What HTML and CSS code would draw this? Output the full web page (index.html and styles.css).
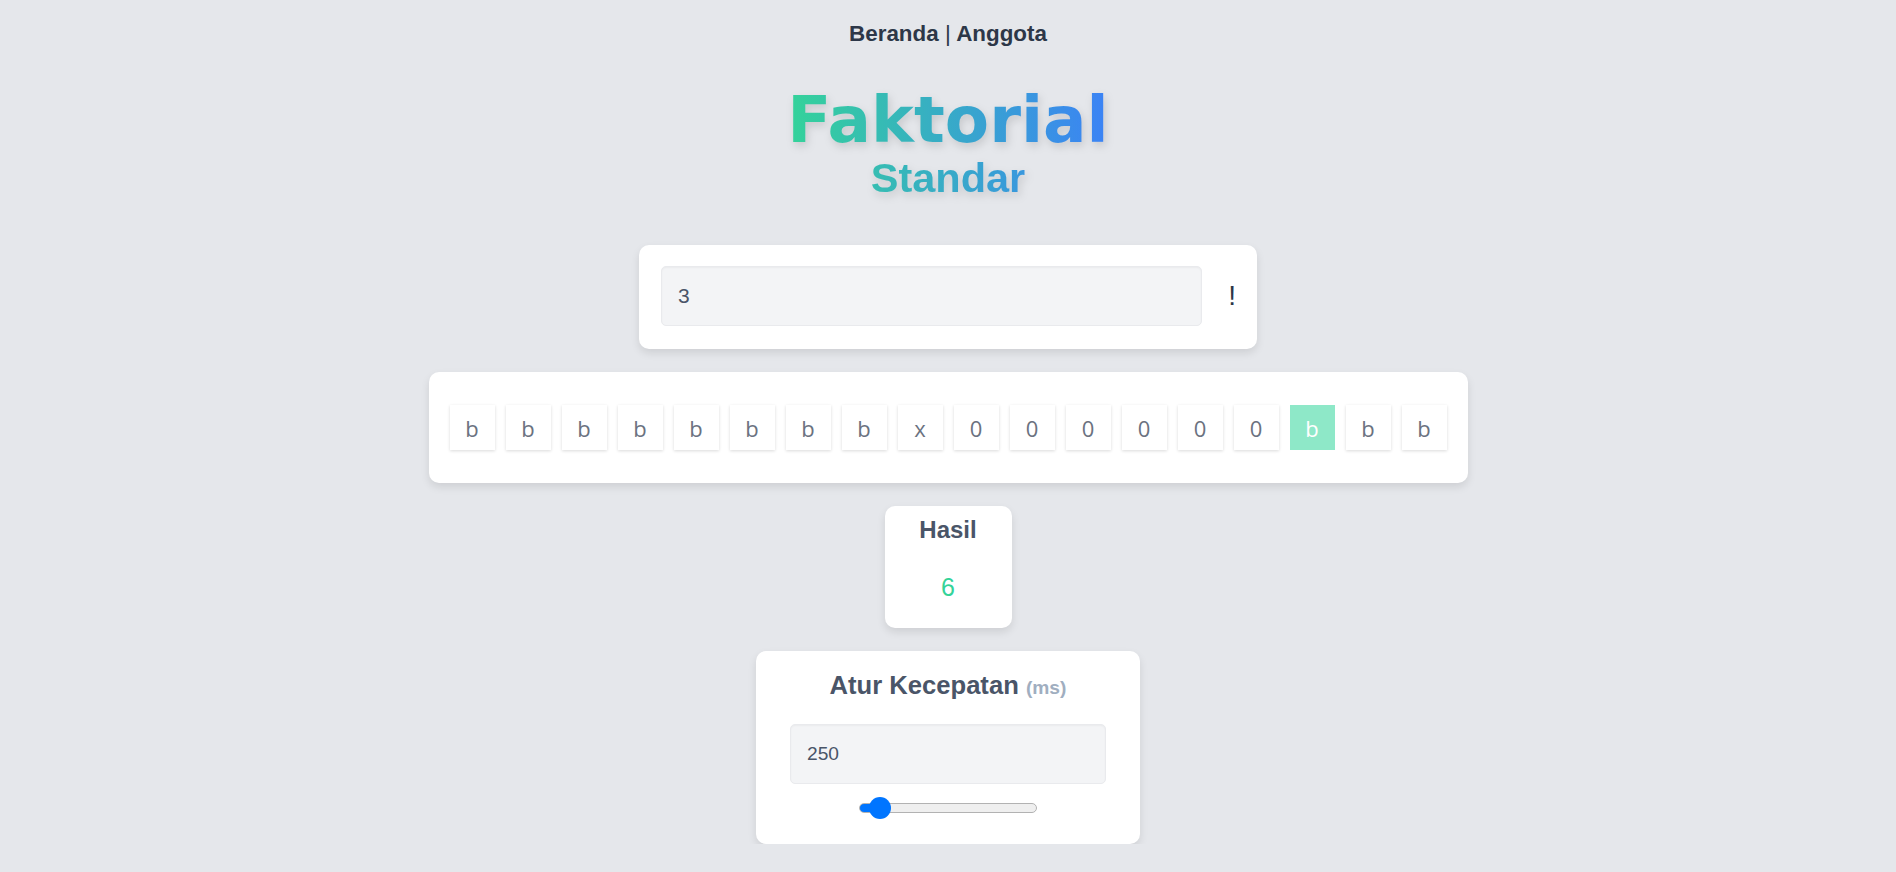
FILE: index.html
```html
<!DOCTYPE html>
<html lang="id">
<head>
<meta charset="utf-8">
<title>Faktorial Standar</title>
<link rel="stylesheet" href="styles.css">
</head>
<body>
<div class="page">
  <nav class="nav"><a href="#">Beranda</a> <span class="sep">|</span> <a href="#">Anggota</a></nav>
  <header class="title">
    <span class="title-main">Faktorial</span>
    <span class="title-sub">Standar</span>
  </header>
  <main class="stack">
    <section class="card input-card">
      <input class="field field-n" type="text" value="3">
      <span class="bang">!</span>
    </section>
    <section class="card tape">
      <div class="cell">b</div>
      <div class="cell">b</div>
      <div class="cell">b</div>
      <div class="cell">b</div>
      <div class="cell">b</div>
      <div class="cell">b</div>
      <div class="cell">b</div>
      <div class="cell">b</div>
      <div class="cell">x</div>
      <div class="cell">0</div>
      <div class="cell">0</div>
      <div class="cell">0</div>
      <div class="cell">0</div>
      <div class="cell">0</div>
      <div class="cell">0</div>
      <div class="cell active">b</div>
      <div class="cell">b</div>
      <div class="cell">b</div>
    </section>
    <section class="card result">
      <h2 class="result-title">Hasil</h2>
      <div class="result-value">6</div>
    </section>
    <section class="card speed">
      <h2 class="speed-title">Atur Kecepatan <span class="unit">(ms)</span></h2>
      <input class="field field-speed" type="text" value="250">
      <input class="slider" type="range" min="100" max="2600" value="250">
    </section>
  </main>
</div>
</body>
</html>
```

FILE: styles.css
```css
body {
  margin: 0;
  background: #e5e7eb;
  font-family: "Liberation Sans", Arial, sans-serif;
  color: #2d3748;
}

.page {
  display: flex;
  flex-direction: column;
  align-items: center;
}

.nav {
  padding-top: 21px;
  font-size: 22.4px;
  font-weight: bold;
  line-height: 26px;
}

.nav a {
  color: #2d3748;
  text-decoration: none;
}

.sep {
  font-weight: normal;
}

.title {
  margin-top: 42px;
  display: flex;
  flex-direction: column;
  align-items: center;
  background: linear-gradient(to right, #34d399, #3b82f6);
  -webkit-background-clip: text;
  background-clip: text;
  color: transparent;
  font-weight: bold;
  filter: drop-shadow(2px 4px 4px rgba(0, 0, 0, 0.13));
}

.title-main {
  font-family: "DejaVu Sans", "Liberation Sans", sans-serif;
  font-size: 64.5px;
  line-height: 62px;
}

.title-sub {
  font-size: 41.5px;
  line-height: 36px;
  margin-top: 9px;
}

.stack {
  display: flex;
  flex-direction: column;
  align-items: center;
  gap: 23px;
  margin-top: 49px;
}

.card {
  background: #fff;
  border-radius: 10px;
  box-shadow: 0 4px 8px rgba(0, 0, 0, 0.1);
  box-sizing: border-box;
}

.input-card {
  width: 618px;
  padding: 21px 21px 23px 22px;
  display: flex;
  align-items: center;
  gap: 26px;
}

.field {
  height: 60px;
  box-sizing: border-box;
  border: 1px solid #e9eaed;
  border-radius: 5px;
  background: #f3f4f6;
  padding: 0 16px;
  font-family: "Liberation Sans", Arial, sans-serif;
  font-size: 19.2px;
  color: #4a5568;
  box-shadow: inset 0 1px 2px rgba(0, 0, 0, 0.04);
  outline: none;
}

.field-n {
  flex: 1;
  min-width: 0;
  font-size: 21px;
}

.bang {
  font-size: 28px;
  color: #2d3748;
}

.tape {
  display: flex;
  gap: 11px;
  padding: 33px 21px;
}

.cell {
  width: 45px;
  height: 45px;
  display: flex;
  align-items: center;
  justify-content: center;
  background: #fff;
  box-shadow: 0 1px 3px rgba(0, 0, 0, 0.15);
  font-family: "Open Sans", sans-serif;
  font-size: 22px;
  color: #6b7280;
}

.cell.active {
  background: #8ee8c8;
  color: #fff;
  box-shadow: none;
}

.result {
  width: 127px;
  padding: 10px 0 26px;
  text-align: center;
}

.result-title {
  margin: 0;
  font-size: 24px;
  line-height: 28px;
  color: #4a5568;
}

.result-value {
  margin-top: 29px;
  font-size: 25px;
  line-height: 29px;
  color: #34d399;
}

.speed {
  width: 384px;
  padding: 20px 34px 25px;
  display: flex;
  flex-direction: column;
  align-items: center;
}

.speed-title {
  margin: 0;
  font-size: 25.6px;
  line-height: 29px;
  color: #4a5568;
}

.unit {
  font-size: 19.2px;
  color: #a0aec0;
}

.field-speed {
  width: 316px;
  margin-top: 22px;
}

.slider {
  -webkit-appearance: none;
  appearance: none;
  margin: 13px 0 0;
  width: 178px;
  height: 22px;
  background: transparent;
}

.slider::-webkit-slider-runnable-track {
  height: 10px;
  box-sizing: border-box;
  border: 1px solid #b2b2b2;
  border-radius: 5px;
  background: linear-gradient(to right, #0075ff 0, #0075ff 20px, #efefef 20px);
}

.slider::-webkit-slider-thumb {
  -webkit-appearance: none;
  appearance: none;
  width: 22px;
  height: 22px;
  margin-top: -7px;
  border: none;
  border-radius: 50%;
  background: #0075ff;
}
```
